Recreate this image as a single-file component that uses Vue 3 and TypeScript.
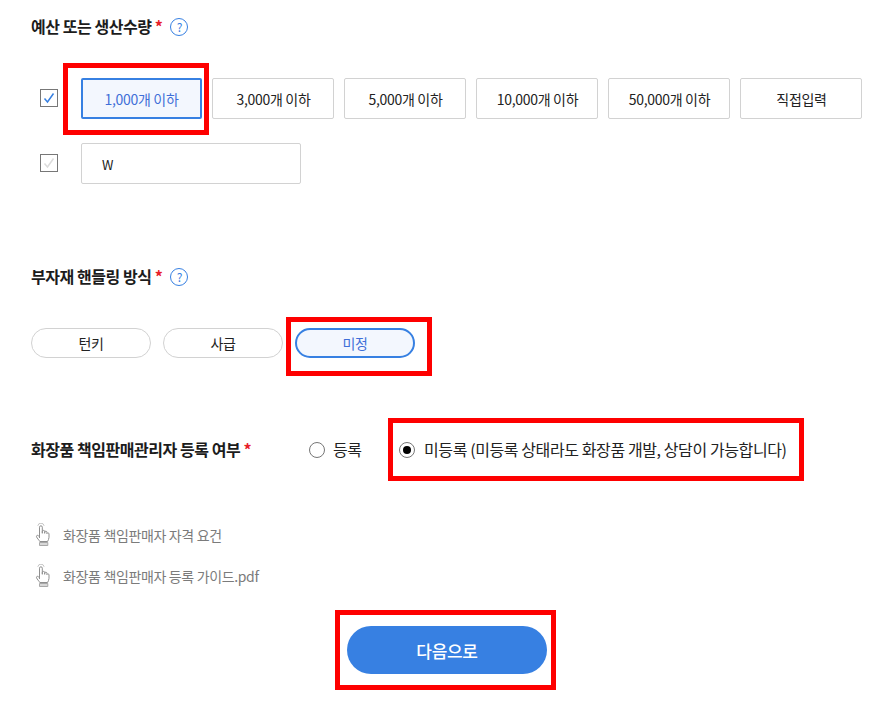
<script setup lang="ts">
const amounts = ['3,000개 이하', '5,000개 이하', '10,000개 이하', '50,000개 이하', '직접입력']
const links = ['화장품 책임판매자 자격 요건', '화장품 책임판매자 등록 가이드.pdf']
</script>

<template>
  <main class="page">
    <section class="budget">
      <h2 class="title"><span class="label">예산 또는 생산수량 <em>*</em></span>
        <span class="help">?</span>
      </h2>
      <div class="row first">
        <span class="check">
          <svg viewBox="0 0 18 18" width="18" height="18"><path d="M4.500 9.500 7.500 13 13.500 4.500" fill="none" stroke="#3780e2" stroke-width="1.500" /></svg>
        </span>
        <div class="choice active">
          1,000개 이하
          <i class="mark" />
        </div>
        <div v-for="a in amounts" :key="a" class="choice">{{ a }}</div>
      </div>
      <div class="row second">
        <span class="check">
          <svg viewBox="0 0 18 18" width="18" height="18"><path d="M4.500 9.500 7.500 13 13.500 4.500" fill="none" stroke="#dcdcdc" stroke-width="1.500" /></svg>
        </span>
        <div class="input">W</div>
      </div>
    </section>

    <section class="handling">
      <h2 class="title"><span class="label">부자재 핸들링 방식 <em>*</em></span>
        <span class="help">?</span>
      </h2>
      <div class="pills">
        <div class="pill">턴키</div>
        <div class="pill">사급</div>
        <div class="pill active">미정<i class="mark" /></div>
      </div>
    </section>

    <section class="register">
      <h2 class="title plain"><span class="label">화장품 책임판매관리자 등록 여부 <em>*</em></span></h2>
      <div class="radio one"><span class="dot" /><span class="text">등록</span></div>
      <div class="radio two">
        <span class="dot on" /><span class="text">미등록 (미등록 상태라도 화장품 개발, 상담이 가능합니다)</span>
        <i class="mark" />
      </div>
    </section>

    <ul class="links">
      <li v-for="l in links" :key="l">
        <svg viewBox="0 0 16 24" width="16" height="24" fill="none" stroke="#8f8f8f" stroke-width="1">
          <path d="M4.500 15V4.200a1.400 1.400 0 0 1 2.800 0V10.500M7.300 10V8.600a1.200 1.200 0 0 1 2.400 0V10.600M9.700 10V9.300a1.100 1.100 0 0 1 2.200 0v1.400M11.900 10.500a1.100 1.100 0 0 1 2.100.4v3.400c0 1.700-.9 2.900-1.400 4.200H4.800c-.7-1.500-2.800-3.200-3.300-4.800-.3-1.100.8-1.800 1.700-1.100l1.300 1.300" />
          <path d="M2.800 2.800a3.200 3.200 0 0 1 6.300 0" stroke="#c4c4c4" />
          <path d="M4.500 19.500h8.300v3H4.500z" fill="#d8d8d8" stroke="#a8a8a8" />
        </svg>
        <span>{{ l }}</span>
      </li>
    </ul>

    <div class="actions">
      <button class="next" type="button">다음으로<i class="mark next-mark" /></button>
    </div>
  </main>
</template>

<style>
html, body { margin: 0; background: #fff; }
</style>

<style scoped>
.page {
  width: 884px;
  height: 712px;
  box-sizing: border-box;
  padding: 16px 0 0 31px;
  overflow: hidden;
  font-family: "Noto Sans CJK KR", "Noto Sans", sans-serif;
  font-size: 14px;
  color: #222;
  letter-spacing: -0.3px;
}
.title {
  display: flex;
  align-items: center;
  height: 22px;
  margin: 0;
  font-size: 16px;
  font-weight: 700;
  color: #1c1c1c;
  letter-spacing: -0.45px;
}
.label {
  line-height: 20px;
  padding-bottom: 2px;
  white-space: pre;
}
.title em {
  color: #e8202a;
  font-style: normal;
}
.help {
  width: 16px;
  height: 16px;
  margin-left: 8px;
  border: 1px solid #3780e2;
  border-radius: 50%;
  color: #3780e2;
  font-size: 12px;
  font-weight: 400;
  line-height: 16px;
  text-align: center;
}
.row {
  display: flex;
  align-items: center;
  gap: 10px;
  margin-left: 9px;
}
.first { margin-top: 40px; }
.second { margin-top: 24px; }
.check {
  display: block;
  width: 18px;
  height: 18px;
  box-sizing: border-box;
  border: 1px solid #777;
  margin-right: 13px;
  margin-bottom: 1px;
}
.check svg { display: block; margin: -1px; }
.choice {
  position: relative;
  width: 122px;
  height: 41px;
  box-sizing: border-box;
  border: 1px solid #d2d2d2;
  border-radius: 2px;
  padding-left: 1px;
  display: flex;
  align-items: center;
  justify-content: center;
  white-space: nowrap;
}
.choice.active {
  width: 121px;
  padding-left: 0;
}
.choice.active, .pill.active {
  border: 2px solid #3780e2;
  background: #f3f7fe;
  color: #3f6fd8;
}
.input {
  width: 220px;
  height: 41px;
  box-sizing: border-box;
  border: 1px solid #d2d2d2;
  border-radius: 2px;
  padding-left: 20px;
  font-size: 13px;
  line-height: 41px;
}
.mark {
  position: absolute;
  border: 5px solid #fe0000;
  pointer-events: none;
}
.choice .mark { inset: -17px -9px -18px -20px; }
.handling { margin-top: 82px; }
.pills {
  display: flex;
  gap: 12px;
  margin-top: 40px;
}
.pill {
  position: relative;
  width: 120px;
  height: 30px;
  box-sizing: border-box;
  border: 1px solid #d2d2d2;
  border-radius: 15px;
  display: flex;
  align-items: center;
  justify-content: center;
}
.pill .mark { inset: -13px -19px -20px -11px; }
.register {
  display: flex;
  align-items: center;
  height: 24px;
  margin-top: 80px;
}
.plain { width: 278px; flex: none; }
.radio {
  position: relative;
  display: flex;
  align-items: center;
  font-size: 16px;
  letter-spacing: -0.4px;
  white-space: nowrap;
}
.text {
  line-height: 22px;
  padding-bottom: 2px;
}
.one { width: 90px; }
.dot {
  width: 16px;
  height: 16px;
  box-sizing: border-box;
  border: 1px solid #767676;
  border-radius: 50%;
  margin-right: 8px;
  background: #fff;
  flex: none;
  position: relative;
}
.two .dot { margin-right: 9px; }
.dot.on::after {
  content: "";
  position: absolute;
  inset: 3px;
  border-radius: 50%;
  background: #000;
}
.two .mark { inset: -20px -17px -19px -11px; }
.links {
  list-style: none;
  margin: 61px 0 0 4px;
  padding: 0;
  color: #7b7b7b;
  letter-spacing: -0.35px;
}
.links li {
  display: flex;
  align-items: center;
  gap: 12px;
  height: 24px;
  margin-bottom: 17px;
}
.actions {
  display: flex;
  justify-content: center;
  width: 832px;
  margin-top: 38px;
}
.next {
  position: relative;
  width: 200px;
  height: 48px;
  border: 0;
  border-radius: 24px;
  background: #3780e2;
  color: #fff;
  font: 500 17px "Noto Sans CJK KR", sans-serif;
  letter-spacing: -0.3px;
}
.next-mark { inset: -16px -9px -16px -12px; }
</style>
